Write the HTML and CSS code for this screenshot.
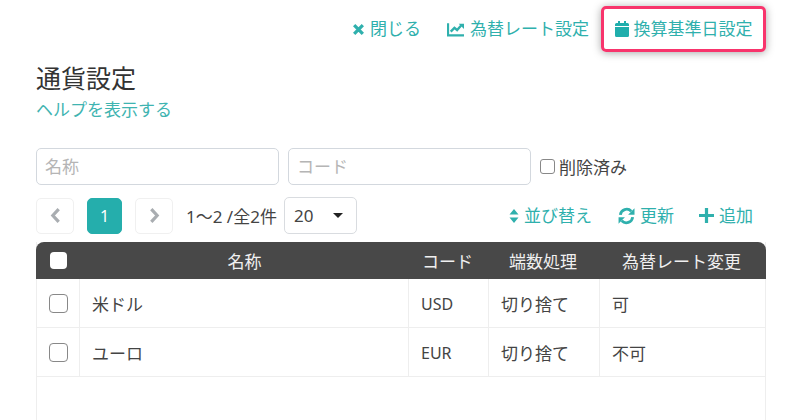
FILE: index.html
```html
<!DOCTYPE html>
<html lang="ja">
<head>
<meta charset="utf-8">
<title>通貨設定</title>
<link rel="stylesheet" href="styles.css">
</head>
<body>
<div class="page">
  <nav class="topnav">
    <a class="link"><svg class="ic ic-x" viewBox="0 0 12 12"><path d="M2 2l8 8M10 2l-8 8" stroke="currentColor" stroke-width="3" fill="none"/></svg>閉じる</a>
    <a class="link"><svg class="ic" viewBox="0 0 16 14"><path d="M1 1v11.500h15" stroke="currentColor" stroke-width="2" fill="none"/><path d="M3.500 9l3.500-3.500 2.500 2L13.500 3" stroke="currentColor" stroke-width="2.200" fill="none"/><path d="M11 1.500h5v5z" fill="currentColor"/></svg>為替レート設定</a>
    <a class="link link-hl"><svg class="ic" viewBox="0 0 14 16"><path d="M3 0h2v2h4V0h2v2h1.500A1.500 1.500 0 0 1 14 3.500V5H0V3.500A1.500 1.500 0 0 1 1.500 2H3zM0 6h14v8.500a1.500 1.500 0 0 1-1.500 1.500h-11A1.500 1.500 0 0 1 0 14.500z" fill="currentColor"/></svg>換算基準日設定</a>
  </nav>
  <h1 class="title">通貨設定</h1>
  <a class="help">ヘルプを表示する</a>
  <form class="filters">
    <input class="field" type="text" placeholder="名称">
    <input class="field" type="text" placeholder="コード">
    <label class="deleted"><span class="box box-small"></span>削除済み</label>
  </form>
  <div class="toolbar">
    <button class="pg" type="button"><svg class="chev" viewBox="0 0 10 16"><path d="M8 2L2.500 8 8 14" stroke="currentColor" stroke-width="3" fill="none"/></svg></button>
    <button class="pg pg-on" type="button">1</button>
    <button class="pg" type="button"><svg class="chev" viewBox="0 0 10 16"><path d="M2 2l5.500 6L2 14" stroke="currentColor" stroke-width="3" fill="none"/></svg></button>
    <span class="count">1〜2 /全2件</span>
    <div class="select"><span>20</span><i class="caret"></i></div>
    <div class="actions">
      <a class="link"><svg class="ic ic-sort" viewBox="0 0 10 16"><path d="M5 1l4.500 5.500h-9zM5 15L.5 9.500h9z" fill="currentColor"/></svg>並び替え</a>
      <a class="link link-sync"><svg class="ic ic-sync" viewBox="0 0 16 16"><path d="M2.200 7A6 6 0 0 1 12.500 3.500" stroke="currentColor" stroke-width="2.600" fill="none"/><path d="M15.500 .8v6h-6z" fill="currentColor"/><path d="M13.800 9A6 6 0 0 1 3.500 12.500" stroke="currentColor" stroke-width="2.600" fill="none"/><path d="M.5 15.200v-6h6z" fill="currentColor"/></svg>更新</a>
      <a class="link"><svg class="ic ic-plus" viewBox="0 0 14 14"><path d="M7 0v14M0 7h14" stroke="currentColor" stroke-width="3" fill="none"/></svg>追加</a>
    </div>
  </div>
  <div class="table">
    <div class="row row-head">
      <div class="cell c-check"><span class="box box-white"></span></div>
      <div class="cell c-name">名称</div>
      <div class="cell c-code">コード</div>
      <div class="cell c-round">端数処理</div>
      <div class="cell c-rate">為替レート変更</div>
    </div>
    <div class="row">
      <div class="cell c-check"><span class="box"></span></div>
      <div class="cell c-name">米ドル</div>
      <div class="cell c-code">USD</div>
      <div class="cell c-round">切り捨て</div>
      <div class="cell c-rate">可</div>
    </div>
    <div class="row">
      <div class="cell c-check"><span class="box"></span></div>
      <div class="cell c-name">ユーロ</div>
      <div class="cell c-code">EUR</div>
      <div class="cell c-round">切り捨て</div>
      <div class="cell c-rate">不可</div>
    </div>
  </div>
</div>
</body>
</html>
```
FILE: styles.css
```css
* { box-sizing: border-box; }
html, body { margin: 0; height: 100%; overflow: hidden; background: #fff; }
body {
  font-family: "Noto Sans", "Noto Sans CJK JP", sans-serif;
  font-size: 17px;
  color: #444;
}
.page { height: 420px; padding: 6px 34px 0 36px; display: flex; flex-direction: column; }
.topnav { display: flex; justify-content: flex-end; align-items: center; height: 46px; gap: 26px; }
.link { display: inline-flex; align-items: center; color: #2fb0ad; white-space: nowrap; line-height: 24px; }
.ic { width: 17px; height: 15px; margin-right: 6px; flex: none; }
.ic-x { width: 13px; height: 13px; margin-right: 5px; }
.link-hl {
  height: 46px;
  width: 165px;
  justify-content: center;
  margin-left: -14px;
  border: 3px solid #f8346c;
  border-radius: 5px;
  box-shadow: 0 1px 8px rgba(0,0,0,.35);
}
.link-hl .ic { width: 14px; height: 16px; margin-right: 5px; color: #20aeac; }
.title { margin: 10px 0 0; font-size: 25px; font-weight: 400; line-height: 32px; color: #333; }
.help { margin-top: 4px; color: #3fb4b1; line-height: 24px; }
.filters { display: flex; align-items: center; margin-top: 26px; gap: 9px; }
.field {
  width: 243px; height: 37px;
  border: 1px solid #d3d8de; border-radius: 5px;
  padding: 0 8px;
  font: inherit; color: #444; background: #fff;
}
.field::placeholder { color: #b5b5b5; opacity: 1; }
.deleted { display: inline-flex; align-items: center; gap: 4px; color: #444; }
.box { display: block; width: 19px; height: 19px; border: 1px solid #888; border-radius: 4px; background: #fff; }
.box-small { width: 15px; height: 15px; border-radius: 3px; }
.box-white { width: 17px; height: 17px; border: 0; }
.toolbar { display: flex; align-items: center; margin-top: 12px; height: 37px; }
.pg {
  width: 38px; height: 36px; padding: 0;
  display: flex; align-items: center; justify-content: center;
  background: #fff; border: 1px solid #f0f0f0; border-radius: 5px;
  color: #a9adb1; font: inherit;
}
.pg-on { width: 35px; margin: 0 13px; background: #25aeac; border-color: #25aeac; color: #fff; font-size: 16px; }
.chev { width: 11px; height: 17px; }
.count { margin-left: 13px; color: #444; white-space: nowrap; }
.select {
  width: 73px; height: 37px; margin-left: 7px; padding: 0 13px 0 9px;
  display: flex; align-items: center; justify-content: space-between;
  border: 1px solid #d9dce0; border-radius: 5px;
}
.caret { width: 0; height: 0; border: 5.5px solid transparent; border-top-color: #222; border-bottom: 0; }
.actions { margin-left: auto; display: flex; align-items: center; gap: 25px; padding-right: 13px; }
.ic-sort { width: 10px; height: 16px; margin-right: 5px; }
.ic-sync { width: 17px; height: 18px; margin-right: 5px; }
.ic-plus { width: 15px; height: 15px; margin-right: 5px; }
.link-sync { margin-left: 1px; }
.table {
  flex: 1;
  margin-top: 8px;
  border-left: 1px solid #eee;
  border-right: 1px solid #eee;
}
.row { display: grid; grid-template-columns: 43px 329px 80px 111px 1fr; height: 49px; border-bottom: 1px solid #eee; }
.cell { display: flex; align-items: center; padding-left: 12px; border-right: 1px solid #eee; }
.cell:last-child { border-right: 0; }
.c-check { justify-content: center; padding: 0; }
.c-code { font-size: 16px; padding-top: 2px; }
.row-head {
  height: 37px; margin: 0 -1px;
  grid-template-columns: 44px 329px 80px 111px 1fr;
  background: #484848; color: #f0f0f0;
  border-radius: 8px 8px 0 0; border-bottom: 0;
}
.row-head .cell { border-right: 0; justify-content: center; padding: 0; font-size: 17px; }
.row-head .c-code, .row-head .c-round, .row-head .c-rate { padding-right: 3px; }
```
